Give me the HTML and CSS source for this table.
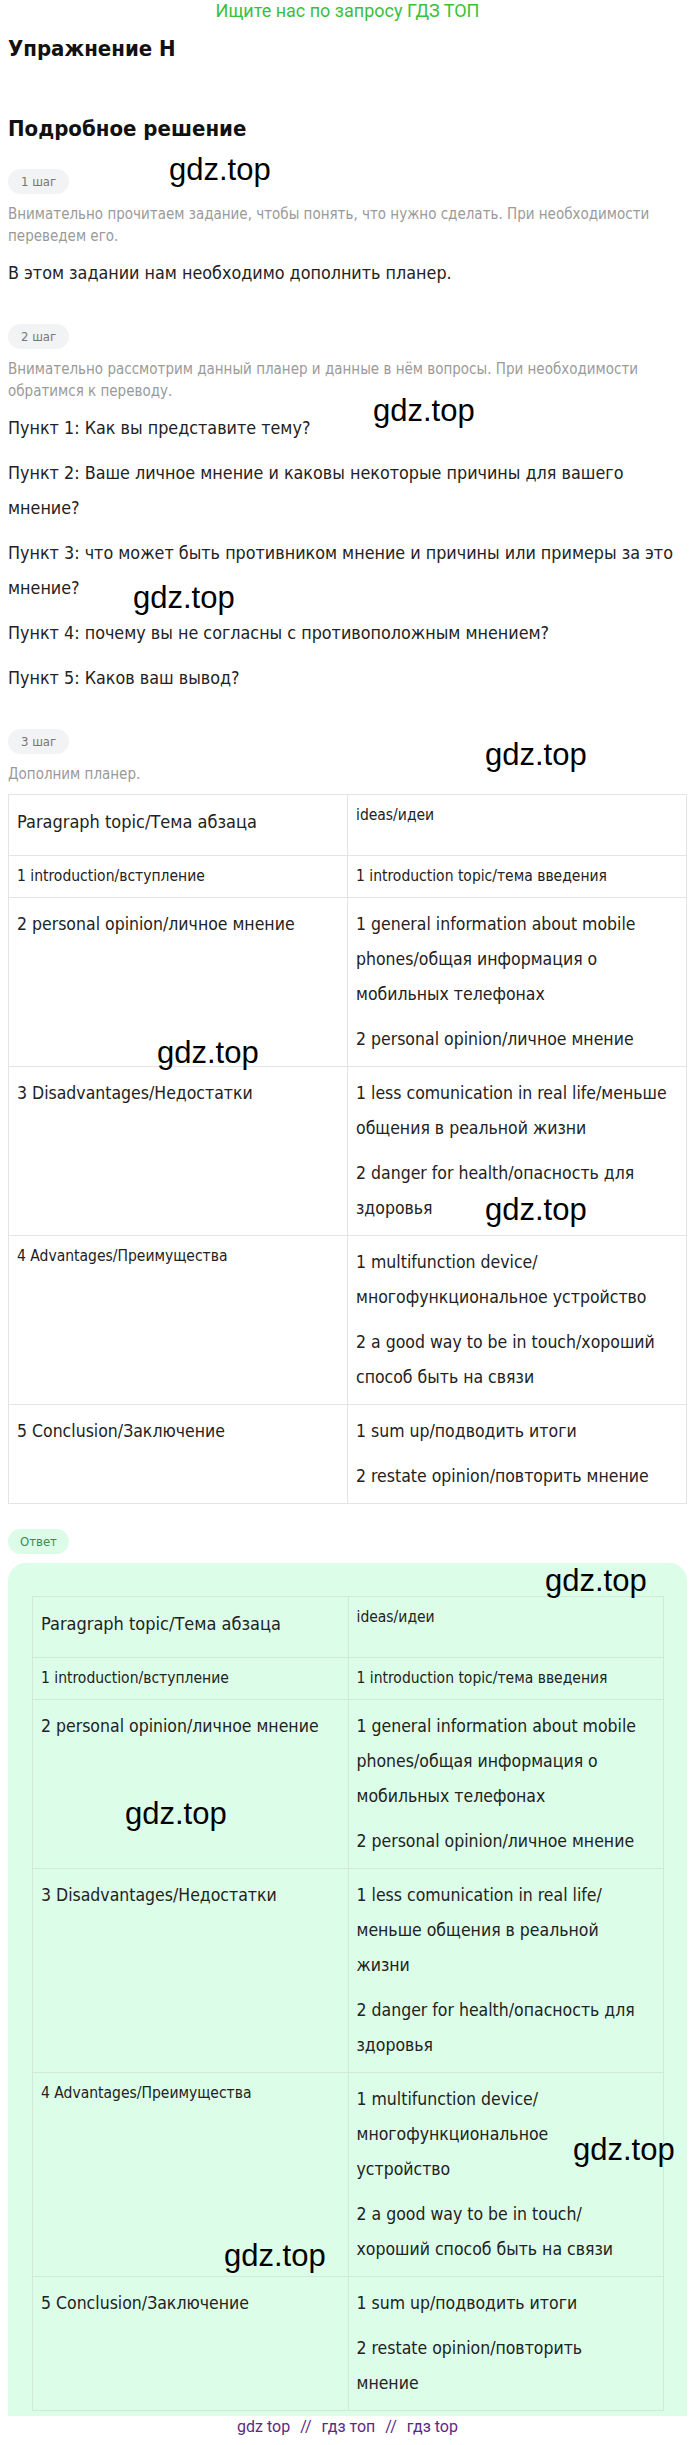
FILE: index.html
```html
<!DOCTYPE html>
<html lang="ru">
<head>
<meta charset="utf-8">
<title>Упражнение H</title>
<link rel="stylesheet" href="styles.css">
</head>
<body>
<div class="page">
  <div class="banner">Ищите нас по запросу ГДЗ ТОП</div>
  <h1 class="title">Упражнение H</h1>
  <h2 class="subtitle">Подробное решение</h2>

  <section class="step">
    <span class="pill">1 шаг</span>
    <p class="hint">Внимательно прочитаем задание, чтобы понять, что нужно сделать. При необходимости<br>переведем его.</p>
    <p class="text">В этом задании нам необходимо дополнить планер.</p>
  </section>

  <section class="step">
    <span class="pill">2 шаг</span>
    <p class="hint">Внимательно рассмотрим данный планер и данные в нём вопросы. При необходимости<br>обратимся к переводу.</p>
    <p class="text">Пункт 1: Как вы представите тему?</p>
    <p class="text">Пункт 2: Ваше личное мнение и каковы некоторые причины для вашего<br>мнение?</p>
    <p class="text">Пункт 3: что может быть противником мнение и причины или примеры за это<br>мнение?</p>
    <p class="text">Пункт 4: почему вы не согласны с противоположным мнением?</p>
    <p class="text">Пункт 5: Каков ваш вывод?</p>
  </section>

  <section class="step">
    <span class="pill">3 шаг</span>
    <p class="hint">Дополним планер.</p>
    <table class="plan">
      <tr class="head">
        <td><p class="lg">Paragraph topic/Тема абзаца</p></td>
        <td><p class="sm">ideas/идеи</p></td>
      </tr>
      <tr>
        <td><p class="sm">1 introduction/вступление</p></td>
        <td><p class="sm">1 introduction topic/тема введения</p></td>
      </tr>
      <tr>
        <td><p>2 personal opinion/личное мнение</p></td>
        <td><p>1 general information about mobile<br>phones/общая информация о<br>мобильных телефонах</p><p>2 personal opinion/личное мнение</p></td>
      </tr>
      <tr>
        <td><p>3 Disadvantages/Недостатки</p></td>
        <td><p>1 less comunication in real life/меньше<br>общения в реальной жизни</p><p>2 danger for health/опасность для<br>здоровья</p></td>
      </tr>
      <tr>
        <td><p class="sm">4 Advantages/Преимущества</p></td>
        <td><p>1 multifunction device/<br>многофункциональное устройство</p><p>2 a good way to be in touch/хороший<br>способ быть на связи</p></td>
      </tr>
      <tr>
        <td><p>5 Conclusion/Заключение</p></td>
        <td><p>1 sum up/подводить итоги</p><p>2 restate opinion/повторить мнение</p></td>
      </tr>
    </table>
  </section>

  <section class="answer">
    <span class="pill pill-green">Ответ</span>
    <div class="answer-box">
      <table class="plan plan-green">
        <tr class="head">
          <td><p class="lg">Paragraph topic/Тема абзаца</p></td>
          <td><p class="sm">ideas/идеи</p></td>
        </tr>
        <tr>
          <td><p class="sm">1 introduction/вступление</p></td>
          <td><p class="sm">1 introduction topic/тема введения</p></td>
        </tr>
        <tr>
          <td><p>2 personal opinion/личное мнение</p></td>
          <td><p>1 general information about mobile<br>phones/общая информация о<br>мобильных телефонах</p><p>2 personal opinion/личное мнение</p></td>
        </tr>
        <tr>
          <td><p>3 Disadvantages/Недостатки</p></td>
          <td><p>1 less comunication in real life/<br>меньше общения в реальной<br>жизни</p><p>2 danger for health/опасность для<br>здоровья</p></td>
        </tr>
        <tr>
          <td><p class="sm">4 Advantages/Преимущества</p></td>
          <td><p>1 multifunction device/<br>многофункциональное<br>устройство</p><p>2 a good way to be in touch/<br>хороший способ быть на связи</p></td>
        </tr>
        <tr>
          <td><p>5 Conclusion/Заключение</p></td>
          <td><p>1 sum up/подводить итоги</p><p>2 restate opinion/повторить<br>мнение</p></td>
        </tr>
      </table>
    </div>
  </section>

  <div class="footer">gdz top <span class="sep">//</span> гдз топ <span class="sep">//</span> гдз top</div>

  <span class="wm wm1">gdz.top</span>
  <span class="wm wm2">gdz.top</span>
  <span class="wm wm3">gdz.top</span>
  <span class="wm wm4">gdz.top</span>
  <span class="wm wm5">gdz.top</span>
  <span class="wm wm6">gdz.top</span>
  <span class="wm wm7">gdz.top</span>
  <span class="wm wm8">gdz.top</span>
  <span class="wm wm9">gdz.top</span>
  <span class="wm wm10">gdz.top</span>
</div>
</body>
</html>
```
FILE: styles.css
```css
* { box-sizing: border-box; }

body {
  margin: 0;
  background: #fff;
  color: #222;
  font-family: "DejaVu Sans Condensed", "DejaVu Sans", sans-serif;
}

.page {
  position: relative;
  width: 679px;
  margin-left: 8px;
}

.banner {
  height: 22px;
  line-height: 22px;
  font-family: Roboto, "Liberation Sans", sans-serif;
  font-size: 18px;
  color: #3ac13a;
  text-align: center;
}

.title,
.subtitle {
  margin: 12px 0 0;
  font-size: 22px;
  line-height: 30px;
  font-weight: 700;
  color: #111;
}

.subtitle { margin-top: 50px; }

.step { margin-top: 25px; }
.step + .step { margin-top: 34px; }

.pill {
  display: inline-block;
  height: 25px;
  line-height: 25px;
  padding: 0 13px;
  border-radius: 13px;
  background: #f2f3f5;
  color: #777;
  font-size: 13px;
  vertical-align: top;
}

.hint {
  margin: 9px 0 0;
  font-size: 15px;
  line-height: 22px;
  color: #9a9a9a;
}

.text {
  margin: 8px 0 0;
  font-size: 17.8px;
  line-height: 35px;
}

.text + .text { margin-top: 10px; }

.plan {
  width: 100%;
  margin-top: 9px;
  border-collapse: collapse;
  table-layout: fixed;
}

.plan td {
  width: 50%;
  border: 1px solid #e4e4e4;
  padding: 9px 2px 9px 8px;
  vertical-align: top;
}

.plan p {
  margin: 0;
  font-size: 17.5px;
  line-height: 35px;
}

.plan p + p { margin-top: 10px; }

.plan p.lg { font-size: 18px; }

.plan p.sm {
  font-size: 15.5px;
  line-height: 23px;
}

.plan .head td { padding-bottom: 16px; }

.answer { margin-top: 25px; }

.pill-green {
  padding: 0 12px;
  background: #dcfce7;
  color: #3b8b58;
}

.answer-box {
  margin-top: 9px;
  padding: 33px 23px 5px 24px;
  background: #dcfde8;
  border-radius: 18px 18px 0 0;
}

.plan-green { margin-top: 0; }
.plan-green td { border-color: #d0e9d9; }

.footer {
  margin-top: 1px;
  font-family: Roboto, "Liberation Sans", sans-serif;
  font-size: 16px;
  line-height: 20px;
  color: #5b2a86;
  text-align: center;
}

.sep { margin: 0 6px; }

.wm {
  position: absolute;
  font-family: "Liberation Sans", Arial, sans-serif;
  font-size: 31px;
  line-height: 30px;
  color: #000;
  white-space: nowrap;
}

.wm1 { left: 161px; top: 155px; }
.wm2 { left: 365px; top: 396px; }
.wm3 { left: 125px; top: 583px; }
.wm4 { left: 477px; top: 740px; }
.wm5 { left: 149px; top: 1038px; }
.wm6 { left: 477px; top: 1195px; }
.wm7 { left: 537px; top: 1566px; }
.wm8 { left: 117px; top: 1799px; }
.wm9 { left: 565px; top: 2135px; }
.wm10 { left: 216px; top: 2241px; }
```
